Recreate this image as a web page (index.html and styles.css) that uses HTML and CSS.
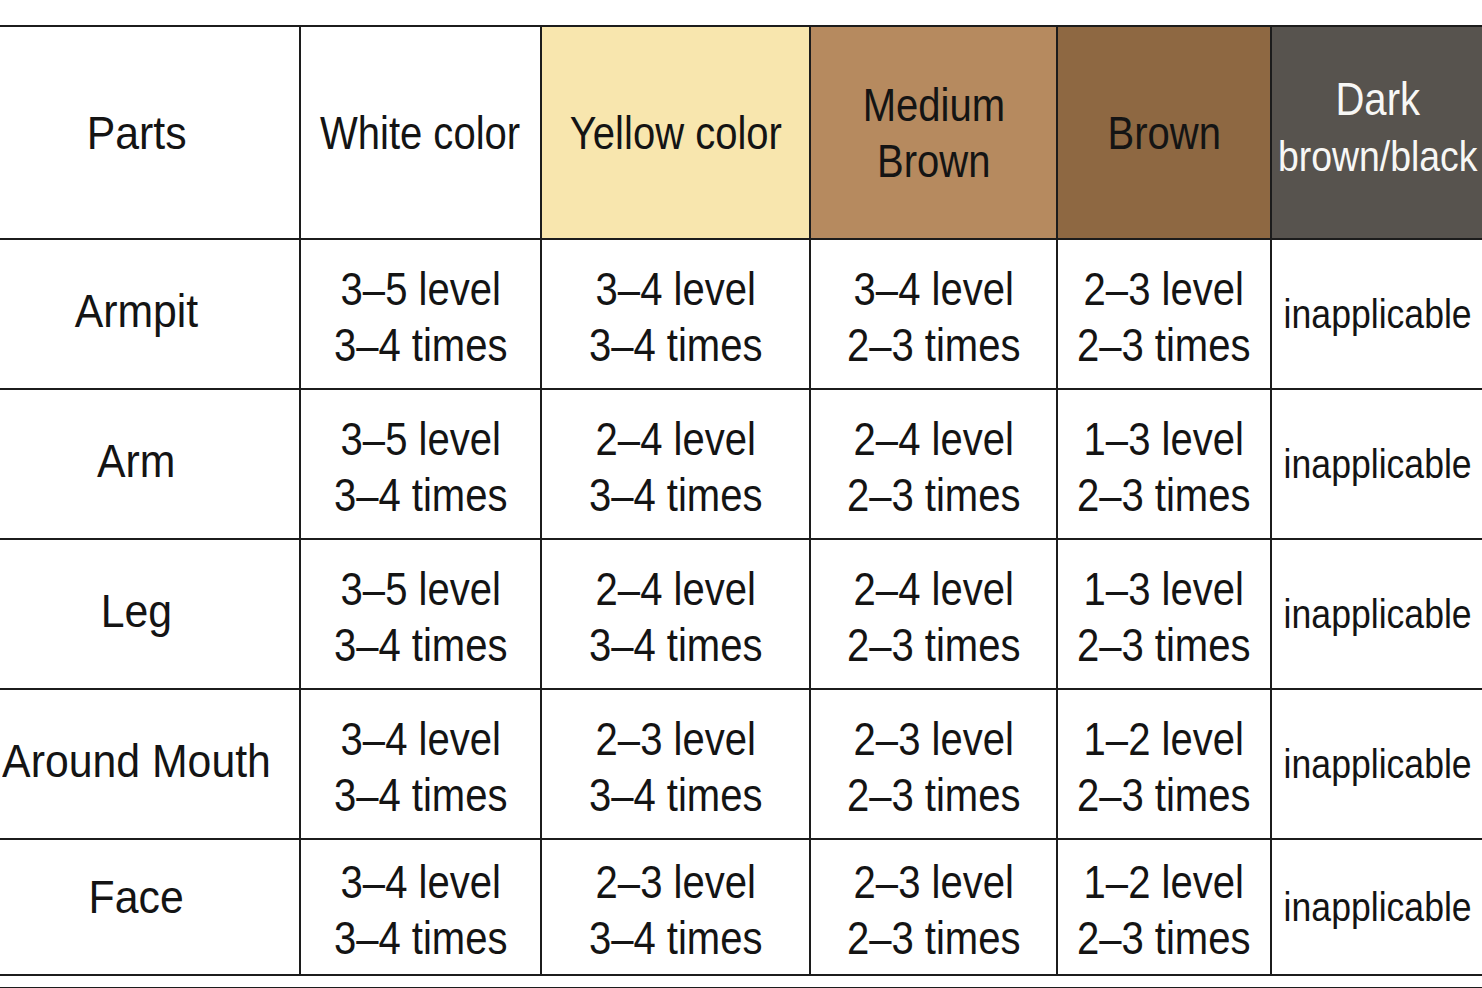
FILE: index.html
```html
<!DOCTYPE html>
<html lang="en">
<head>
<meta charset="utf-8">
<title>Hair removal levels by skin color</title>
<link rel="stylesheet" href="styles.css">
</head>
<body>
<div class="page">
  <table class="chart">
    <colgroup>
      <col class="c-parts">
      <col class="c-white">
      <col class="c-yellow">
      <col class="c-medium">
      <col class="c-brown">
      <col class="c-dark">
    </colgroup>
    <thead>
      <tr class="head">
        <th class="part"><span class="t lbl">Parts</span></th>
        <th><span class="t">White color</span></th>
        <th class="yellow"><span class="t">Yellow color</span></th>
        <th class="medium"><span class="t">Medium<br>Brown</span></th>
        <th class="brown"><span class="t">Brown</span></th>
        <th class="dark"><span class="t"><span class="dark-top">Dark</span><br><span class="dark-bottom">brown/black</span></span></th>
      </tr>
    </thead>
    <tbody>
      <tr class="r1">
        <td class="part"><span class="t lbl">Armpit</span></td>
        <td><span class="t">3–5 level<br>3–4 times</span></td>
        <td><span class="t">3–4 level<br>3–4 times</span></td>
        <td><span class="t">3–4 level<br>2–3 times</span></td>
        <td><span class="t">2–3 level<br>2–3 times</span></td>
        <td class="na"><span class="t">inapplicable</span></td>
      </tr>
      <tr class="r2">
        <td class="part"><span class="t lbl">Arm</span></td>
        <td><span class="t">3–5 level<br>3–4 times</span></td>
        <td><span class="t">2–4 level<br>3–4 times</span></td>
        <td><span class="t">2–4 level<br>2–3 times</span></td>
        <td><span class="t">1–3 level<br>2–3 times</span></td>
        <td class="na"><span class="t">inapplicable</span></td>
      </tr>
      <tr class="r3">
        <td class="part"><span class="t lbl">Leg</span></td>
        <td><span class="t">3–5 level<br>3–4 times</span></td>
        <td><span class="t">2–4 level<br>3–4 times</span></td>
        <td><span class="t">2–4 level<br>2–3 times</span></td>
        <td><span class="t">1–3 level<br>2–3 times</span></td>
        <td class="na"><span class="t">inapplicable</span></td>
      </tr>
      <tr class="r4">
        <td class="part"><span class="t lbl">Around Mouth</span></td>
        <td><span class="t">3–4 level<br>3–4 times</span></td>
        <td><span class="t">2–3 level<br>3–4 times</span></td>
        <td><span class="t">2–3 level<br>2–3 times</span></td>
        <td><span class="t">1–2 level<br>2–3 times</span></td>
        <td class="na"><span class="t">inapplicable</span></td>
      </tr>
      <tr class="r5">
        <td class="part"><span class="t lbl">Face</span></td>
        <td><span class="t">3–4 level<br>3–4 times</span></td>
        <td><span class="t">2–3 level<br>3–4 times</span></td>
        <td><span class="t">2–3 level<br>2–3 times</span></td>
        <td><span class="t">1–2 level<br>2–3 times</span></td>
        <td class="na"><span class="t">inapplicable</span></td>
      </tr>
    </tbody>
  </table>
  <div class="rule"></div>
</div>
</body>
</html>
```

FILE: styles.css
```css
html, body {
  margin: 0;
  padding: 0;
  background: #ffffff;
}

.page {
  padding-top: 25px;
  width: 1482px;
  overflow: hidden;
}

.chart {
  border-collapse: collapse;
  table-layout: fixed;
  width: 1484px;
  font-family: "Liberation Sans", Arial, sans-serif;
  color: #141414;
  font-size: 46px;
}

.c-parts  { width: 300px; }
.c-white  { width: 241px; }
.c-yellow { width: 269px; }
.c-medium { width: 247px; }
.c-brown  { width: 214px; }
.c-dark   { width: 213px; }

.chart th,
.chart td {
  border: 2px solid #1c1c1c;
  text-align: center;
  vertical-align: middle;
  padding: 0;
  font-weight: normal;
  line-height: 56px;
  white-space: nowrap;
  overflow: visible;
}

.chart tr > :first-child {
  border-left: none;
}

.chart .part {
  padding-right: 26px;
}

.t {
  display: inline-block;
  transform: scaleX(0.87);
  transform-origin: 50% 50%;
  margin: 0 -40px;
}

.t.lbl {
  transform: scaleX(0.93);
}

.chart tbody td .t {
  position: relative;
  top: 3px;
}

.chart tbody td .t.lbl {
  top: -3px;
}

.chart .r5 td .t.lbl {
  top: -10px;
}

.head th {
  height: 211px;
  font-size: 46px;
}

.head th.yellow { background: #f8e6ae; }
.head th.medium { background: #b68a5f; }
.head th.brown  { background: #8e6842; }
.head th.dark   { background: #57534e; color: #f7f7f5; }

.dark-top { position: relative; top: -5px; }
.dark-bottom { font-size: 43px; position: relative; top: -5px; }

.r1 td, .r2 td, .r3 td, .r4 td { height: 148px; }
.r5 td { height: 134px; }

.chart td.na { font-size: 40px; }
.chart td.na .t { transform: scaleX(0.89); top: 0; }

.rule {
  height: 2px;
  background: #1c1c1c;
  margin-top: 11px;
}
```
